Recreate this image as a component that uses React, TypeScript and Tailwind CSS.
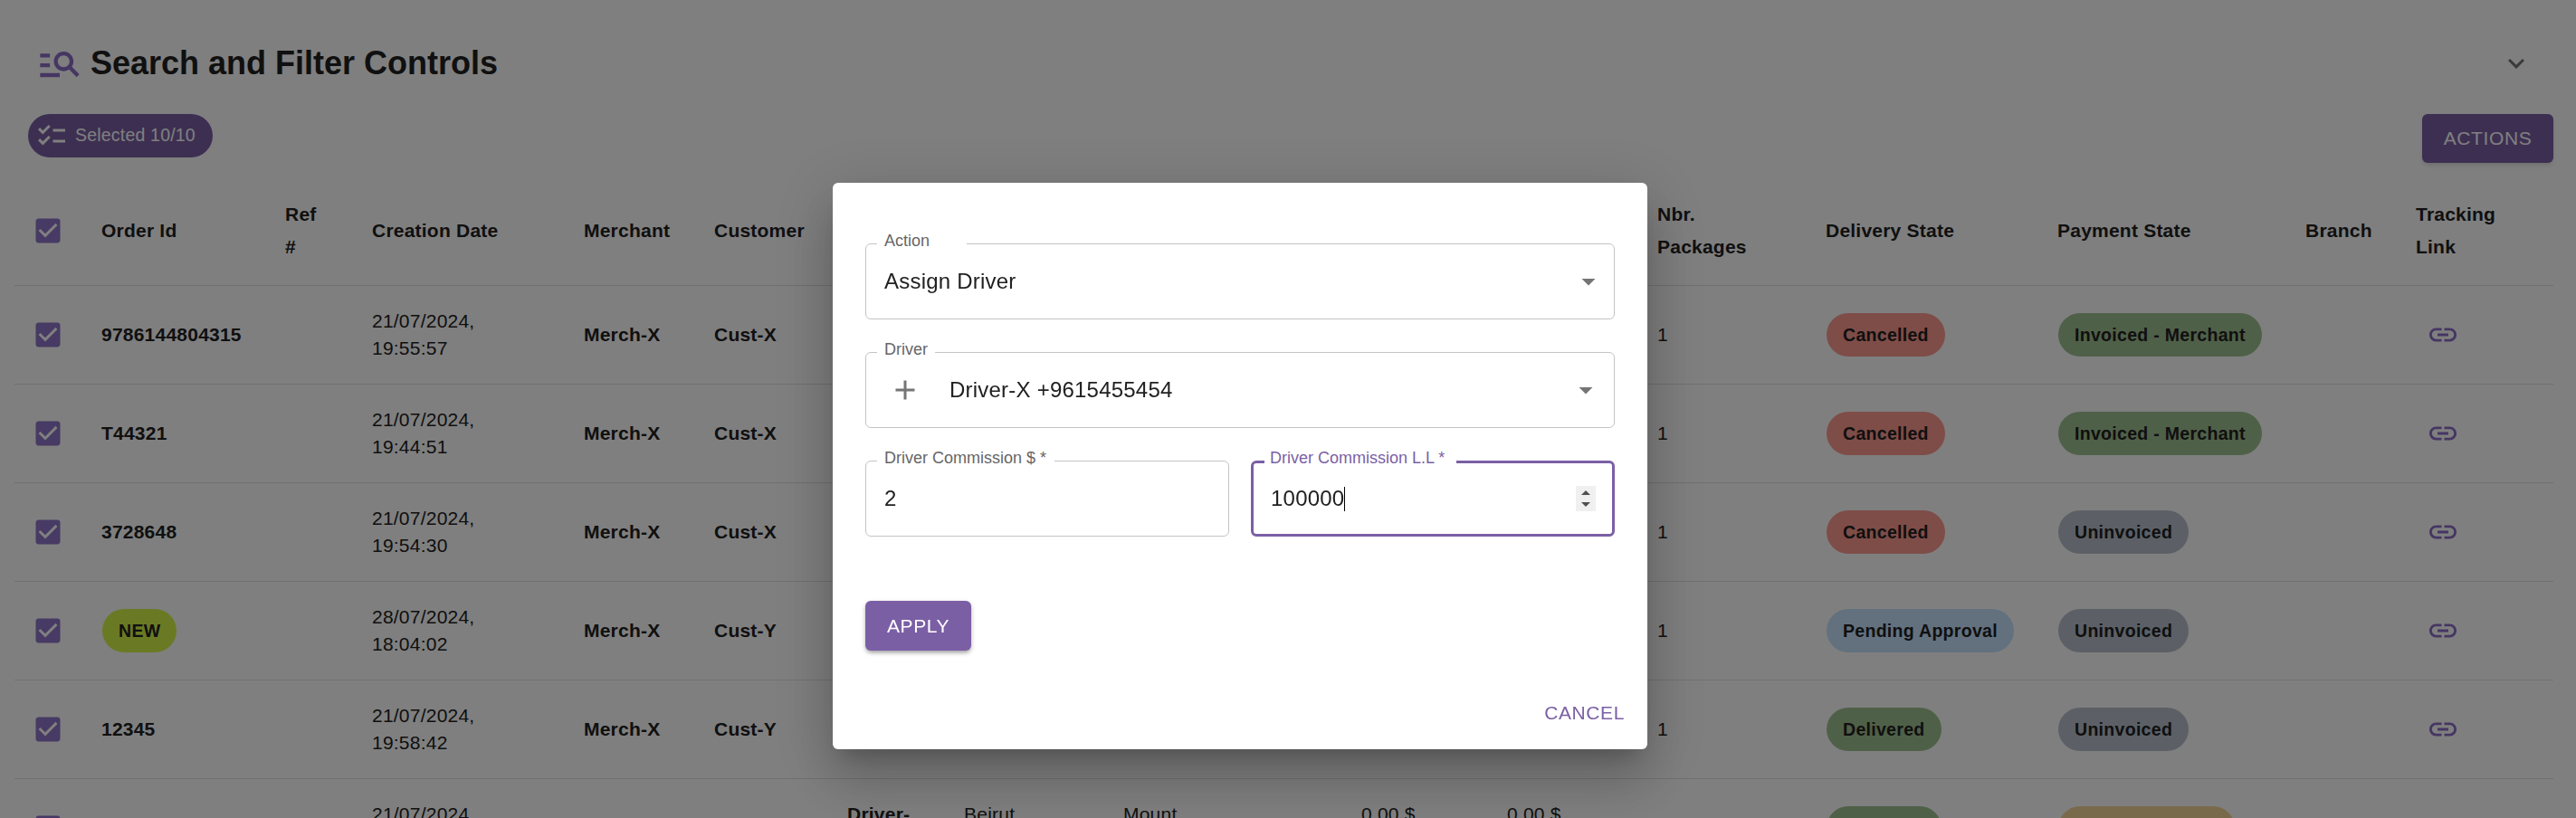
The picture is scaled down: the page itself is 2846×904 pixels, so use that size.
import React from "react";

const Icon = ({ d, className }: { d: string; className: string }) => (
  <svg viewBox="0 0 24 24" fill="currentColor" className={className}>
    <path d={d} />
  </svg>
);

const P = {
  search:
    "M7 9H2V7h5v2zm0 3H2v2h5v-2zm13.59 7l-3.83-3.83c-.8.52-1.74.83-2.76.83-2.76 0-5-2.24-5-5s2.24-5 5-5 5 2.24 5 5c0 1.02-.31 1.96-.83 2.75L22 17.59 20.59 19zM17 11c0-1.65-1.35-3-3-3s-3 1.35-3 3 1.35 3 3 3 3-1.35 3-3zM2 19h10v-2H2v2z",
  checklist:
    "M22 7h-9v2h9V7zm0 8h-9v2h9v-2zM5.54 11 2 7.46l1.41-1.41 2.12 2.12 4.24-4.24 1.41 1.41L5.54 11zm0 8L2 15.46l1.41-1.41 2.12 2.12 4.24-4.24 1.41 1.41L5.54 19z",
  link: "M3.9 12c0-1.71 1.39-3.1 3.1-3.1h4V7H7c-2.76 0-5 2.24-5 5s2.24 5 5 5h4v-1.9H7c-1.71 0-3.1-1.39-3.1-3.1zM8 13h8v-2H8v2zm9-6h-4v1.9h4c1.71 0 3.1 1.39 3.1 3.1s-1.39 3.1-3.1 3.1h-4V17h4c2.76 0 5-2.24 5-5s-2.24-5-5-5z",
  expand: "M16.59 8.59 12 13.17 7.41 8.59 6 10l6 6 6-6z",
  check:
    "M19 3H5c-1.11 0-2 .9-2 2v14c0 1.1.89 2 2 2h14c1.1 0 2-.9 2-2V5c0-1.11-.9-2-2-2zm-9 14l-5-5 1.41-1.41L10 14.17l7.59-7.59L19 8l-9 9z",
  plus: "M19 13h-6v6h-2v-6H5v-2h6V5h2v6h6v2z",
  drop: "m7 10 5 5 5-5z",
};

const Pill = ({ text, color }: { text: string; color: string }) => (
  <span
    className={`ml-px inline-flex h-[48px] items-center whitespace-nowrap rounded-full px-[18px] align-middle text-[19.5px] font-bold tracking-[0.3px] text-[#212121] ${color}`}
  >
    {text}
  </span>
);

const RED = "bg-[#fc9a90]";
const GREEN = "bg-[#9ec090]";
const GREY = "bg-[#b8c0cc]";
const BLUE = "bg-[#c6e2fe]";
const AMBER = "bg-[#f4d498]";

const rows = [
  { id: "9786144804315", date: "21/07/2024, 19:55:57", cust: "Cust-X", d: "Cancelled", dc: RED, p: "Invoiced - Merchant", pc: GREEN },
  { id: "T44321", date: "21/07/2024, 19:44:51", cust: "Cust-X", d: "Cancelled", dc: RED, p: "Invoiced - Merchant", pc: GREEN },
  { id: "3728648", date: "21/07/2024, 19:54:30", cust: "Cust-X", d: "Cancelled", dc: RED, p: "Uninvoiced", pc: GREY },
  { id: "NEW", date: "28/07/2024, 18:04:02", cust: "Cust-Y", d: "Pending Approval", dc: BLUE, p: "Uninvoiced", pc: GREY },
  { id: "12345", date: "21/07/2024, 19:58:42", cust: "Cust-Y", d: "Delivered", dc: GREEN, p: "Uninvoiced", pc: GREY },
  { id: "", date: "21/07/2024, 19:58:42", cust: "", d: "Delivered", dc: GREEN, p: "", pc: `${AMBER} w-[195px]` },
];

const widths = [
  "w-[96px]", "w-[203px]", "w-[96px]", "w-[234px]", "w-[144px]", "w-[147px]", "w-[129px]", "w-[176px]",
  "w-[263px]", "w-[161px]", "w-[166px]", "w-[186px]", "w-[256px]", "w-[274px]", "w-[122px]", "w-[152px]",
];

const headers: React.ReactNode[] = [
  "Order Id", <div className="w-min">Ref #</div>, "Creation Date", "Merchant", "Customer", "", "", "",
  "", "", <div className="w-min">Nbr. Packages</div>, "Delivery State", "Payment State", "Branch",
  <div className="w-min">Tracking Link</div>,
];

const Check = () => (
  <Icon d={P.check} className="ml-[18.5px] block size-[36px] text-[#8e74c8]" />
);

const Field = ({
  label,
  notch,
  focused,
  children,
}: {
  label: string;
  notch: string;
  focused?: boolean;
  children: React.ReactNode;
}) => (
  <div
    className={`relative flex h-[84px] items-center rounded-[6px] border-solid ${
      focused ? "border-[3px] border-[#7b5fa5]" : "border border-[#c4c4c4]"
    }`}
  >
    <span
      className={`absolute left-[12px] h-[21px] whitespace-nowrap bg-white text-[18px] leading-[21px] tracking-normal ${
        focused ? "-top-[16px] pl-[6px] text-[#7b5fa5]" : "-top-[14px] pl-[8px] text-[#666666]"
      } ${notch}`}
    >
      {label}
    </span>
    {children}
  </div>
);

const Arrow = ({ className }: { className: string }) => (
  <Icon d={P.drop} className={`size-[36px] shrink-0 text-[#757575] ${className}`} />
);

export default function App() {
  return (
    <div className="relative h-[904px] w-[2846px] overflow-hidden bg-white font-['Liberation_Sans',Arial,sans-serif] text-[#212121]">
      <div className="flex items-center justify-between pl-[40px] pr-[48px] pt-[44px]">
        <div className="flex items-center gap-[8px]">
          <Icon d={P.search} className="size-[52px] text-[#8b6dc7]" />
          <h1 className="text-[36px] font-bold leading-[52px]">Search and Filter Controls</h1>
        </div>
        <Icon d={P.expand} className="size-[36px] text-[#757575]" />
      </div>

      <div className="mt-[30px] flex items-start justify-between pl-[31px] pr-[25px]">
        <div className="flex h-[48px] items-center gap-[8px] rounded-full bg-[#7b5fa5] pl-[8px] pr-[19px] text-[19.5px] tracking-[0.2px] text-white">
          <Icon d={P.checklist} className="size-[36px]" />
          <span>Selected 10/10</span>
        </div>
        <button className="h-[54px] w-[145px] rounded-[6px] bg-[#7b5fa5] text-[21px] tracking-[0.6px] text-white shadow-md">
          ACTIONS
        </button>
      </div>

      <table className="ml-[16px] mt-[15px] w-[2805px] table-fixed border-collapse text-[21px] tracking-[0.225px]">
        <colgroup>
          {widths.map((w, i) => (
            <col key={i} className={w} />
          ))}
        </colgroup>
        <thead>
          <tr className="h-[120px] border-b border-solid border-[#e0e0e0]">
            <th className="p-0 align-middle">
              <Check />
            </th>
            {headers.map((h, i) => (
              <th key={i} className="p-0 text-left align-middle font-bold leading-[36px]">
                {h}
              </th>
            ))}
          </tr>
        </thead>
        <tbody>
          {rows.map((r, i) => {
            const behind = i < 4;
            return (
              <tr key={i} className="h-[109px] border-b border-solid border-[#e0e0e0] leading-[30px]">
                <td className="p-0 align-middle">
                  <Check />
                </td>
                <td className="p-0 align-middle font-bold">
                  {r.id === "NEW" ? <Pill text="NEW" color="bg-[#d4f448]" /> : r.id}
                </td>
                <td className="p-0" />
                <td className="p-0 align-middle">
                  <div className="w-min">{r.date}</div>
                </td>
                <td className="p-0 align-middle font-bold">{r.cust ? "Merch-X" : ""}</td>
                <td className="p-0 align-middle font-bold">{r.cust}</td>
                <td className="p-0 align-middle font-bold">
                  {!behind && <div className="w-min">Driver-X</div>}
                </td>
                <td className="p-0 align-middle">
                  {!behind && (
                    <>
                      Beirut
                      <br />
                      Hadath
                    </>
                  )}
                </td>
                <td className="p-0 align-middle">
                  {!behind && (
                    <>
                      Mount
                      <br />
                      Lebanon/Baabda
                    </>
                  )}
                </td>
                <td className="p-0 align-middle">
                  {!behind && (
                    <>
                      0.00 $
                      <br />
                      2000 L.L
                    </>
                  )}
                </td>
                <td className="p-0 align-middle">
                  {!behind && (
                    <>
                      0.00 $
                      <br />0 L.L
                    </>
                  )}
                </td>
                <td className="p-0 align-middle">{i < 5 ? "1" : ""}</td>
                <td className="p-0 align-middle">
                  <Pill text={r.d} color={r.dc} />
                </td>
                <td className="p-0 align-middle">
                  <Pill text={r.p} color={r.pc} />
                </td>
                <td className="p-0" />
                <td className="p-0 align-middle">
                  {i < 5 && <Icon d={P.link} className="ml-[12px] block size-[36px] text-[#8b6dc7]" />}
                </td>
              </tr>
            );
          })}
        </tbody>
      </table>

      <div className="fixed inset-0 bg-black/50">
        <div className="absolute left-[920px] top-[202px] h-[626px] w-[900px] rounded-[6px] bg-white px-[36px] pt-[67px] shadow-[0_16px_22px_-10px_rgba(0,0,0,0.2),0_36px_57px_4px_rgba(0,0,0,0.14),0_13px_69px_12px_rgba(0,0,0,0.12)]">
          <div className="flex flex-col gap-[36px] text-[24px] tracking-[0.22px]">
            <Field label="Action" notch="w-[99px]">
              <span className="flex-1 pl-[20px]">Assign Driver</span>
              <Arrow className="mr-[10px]" />
            </Field>
            <Field label="Driver" notch="w-[64px]">
              <Icon d={P.plus} className="ml-[25px] size-[36px] shrink-0 text-[#757575]" />
              <span className="flex-1 pl-[31px]">Driver-X +9615455454</span>
              <Arrow className="mr-[13px]" />
            </Field>
            <div className="grid grid-cols-2 gap-[24px]">
              <Field label="Driver Commission $ *" notch="w-[196px]">
                <span className="pl-[20px]">2</span>
              </Field>
              <Field label="Driver Commission L.L *" notch="w-[212px]" focused>
                <span className="pl-[19px]">100000</span>
                <span className="h-[27px] w-[1px] bg-black" />
                <div className="ml-auto mr-[18px] flex h-[28px] w-[22px] flex-col items-center justify-center gap-[8px] bg-[#f0f0f0]">
                  <span className="h-0 w-0 border-x-[5px] border-b-[5px] border-solid border-x-transparent border-b-[#505050]" />
                  <span className="h-0 w-0 border-x-[5px] border-t-[5px] border-solid border-x-transparent border-t-[#505050]" />
                </div>
              </Field>
            </div>
          </div>
          <button className="mt-[71px] block h-[55px] w-[117px] rounded-[6px] bg-[#7b5fa5] text-[21px] tracking-[0.6px] text-white shadow-[0_3px_4px_-1px_rgba(0,0,0,0.3),0_2px_6px_0_rgba(0,0,0,0.14)]">
            APPLY
          </button>
          <div className="mt-[41px] flex justify-end">
            <button className="-mr-[23px] h-[55px] px-[12px] text-[21px] tracking-[0.6px] text-[#7b5fa5]">
              CANCEL
            </button>
          </div>
        </div>
      </div>
    </div>
  );
}
